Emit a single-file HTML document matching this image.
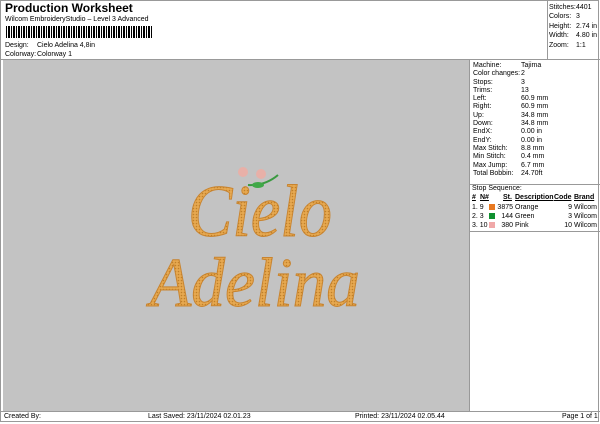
<!DOCTYPE html>
<html><head><style>
body{margin:0;width:600px;height:424px;background:#fff;font-family:"Liberation Sans",sans-serif;font-size:7px;color:#000;position:relative;overflow:hidden}
.a{position:absolute;white-space:nowrap}
.r{position:absolute;left:471px;width:126px}
.r div{height:8.3px;line-height:8.3px}
.r span{display:inline-block;width:46px;padding-left:2px}
</style></head><body>
<div class="a" style="left:0;top:0;width:599px;height:422px;border:1px solid #999;box-sizing:border-box"></div>
<div class="a" style="left:5px;top:1px;font-size:12px;font-weight:bold">Production Worksheet</div>
<div class="a" style="left:5px;top:16px">Wilcom EmbroideryStudio – Level 3 Advanced</div>
<div class="a" style="left:6px;top:26px;width:146px;height:12px;background:repeating-linear-gradient(90deg,#000 0 1px,#fff 1px 2px,#000 2px 4px,#fff 4px 5px)"></div>
<div class="a" style="left:5px;top:42px">Design:</div><div class="a" style="left:37px;top:42px">Cielo Adelina 4,8in</div>
<div class="a" style="left:5px;top:51px">Colorway:</div><div class="a" style="left:37px;top:51px">Colorway 1</div>
<div class="a" style="left:547px;top:0;width:1px;height:59px;background:#999"></div>
<div class="a" style="left:549px;top:3px;line-height:9.4px">Stitches:<br>Colors:<br>Height:<br>Width:<br>Zoom:</div>
<div class="a" style="left:576px;top:3px;line-height:9.4px">4401<br>3<br>2.74 in<br>4.80 in<br>1:1</div>
<div class="a" style="left:0;top:59px;width:600px;height:1px;background:#999"></div>
<div class="a" style="left:3px;top:60px;width:466px;height:351px;background:#c3c3c3"></div>
<div class="a" style="left:469px;top:60px;width:1px;height:351px;background:#999"></div>
<div class="a" style="left:0;top:411px;width:600px;height:1px;background:#999"></div>
<svg class="a" style="left:3px;top:60px" width="466" height="351">
<defs><pattern id="d" width="3" height="3" patternUnits="userSpaceOnUse"><rect width="3" height="3" fill="#e6a850"/><circle cx="1.5" cy="1.5" r="0.8" fill="#c0802a"/></pattern></defs>
<text x="185" y="176" font-family="Liberation Serif" font-style="italic" font-size="74" textLength="144" lengthAdjust="spacingAndGlyphs" fill="url(#d)" stroke="#c88430" stroke-width="1">Cielo</text>
<text x="147" y="246" font-family="Liberation Serif" font-style="italic" font-size="70" textLength="210" lengthAdjust="spacingAndGlyphs" fill="url(#d)" stroke="#c88430" stroke-width="1">Adelina</text>
<circle cx="240" cy="112" r="5" fill="#e8b0a8"/><circle cx="258" cy="114" r="5" fill="#e8b0a8"/>
<path d="M245 125 Q262 126 275 115" stroke="#3a9a40" stroke-width="2" fill="none"/>
<ellipse cx="255" cy="125" rx="6" ry="3" fill="#40a848"/>
</svg>
<div class="r" style="top:62px">
<div><span style="width:48px">Machine:</span>Tajima</div>
<div><span style="width:48px">Color changes:</span>2</div>
<div><span style="width:48px">Stops:</span>3</div>
<div><span style="width:48px">Trims:</span>13</div>
<div><span style="width:48px">Left:</span>60.9 mm</div>
<div><span style="width:48px">Right:</span>60.9 mm</div>
<div><span style="width:48px">Up:</span>34.8 mm</div>
<div><span style="width:48px">Down:</span>34.8 mm</div>
<div><span style="width:48px">EndX:</span>0.00 in</div>
<div><span style="width:48px">EndY:</span>0.00 in</div>
<div><span style="width:48px">Max Stitch:</span>8.8 mm</div>
<div><span style="width:48px">Min Stitch:</span>0.4 mm</div>
<div><span style="width:48px">Max Jump:</span>6.7 mm</div>
<div><span style="width:48px">Total Bobbin:</span>24.70ft</div>
</div>
<div class="a" style="left:469px;top:184px;width:131px;height:1px;background:#999"></div>
<div class="a" style="left:472px;top:185px">Stop Sequence:</div>
<div class="a" style="left:472px;top:194px;font-weight:bold;text-decoration:underline">#</div>
<div class="a" style="left:480px;top:194px;font-weight:bold;text-decoration:underline">N#</div>
<div class="a" style="left:503px;top:194px;font-weight:bold;text-decoration:underline">St.</div>
<div class="a" style="left:515px;top:194px;font-weight:bold;text-decoration:underline">Description</div>
<div class="a" style="left:554px;top:194px;font-weight:bold;text-decoration:underline">Code</div>
<div class="a" style="left:574px;top:194px;font-weight:bold;text-decoration:underline">Brand</div>
<div class="a" style="left:472px;top:203px;line-height:9px">1. 9<br>2. 3<br>3. 10</div>
<div class="a" style="left:489px;top:204px;width:6px;height:6px;background:#e87820"></div>
<div class="a" style="left:489px;top:213px;width:6px;height:6px;background:#109030"></div>
<div class="a" style="left:489px;top:222px;width:6px;height:6px;background:#f0a8a8"></div>
<div class="a" style="left:496px;top:203px;line-height:9px;width:17px;text-align:right">3875<br>144<br>380</div>
<div class="a" style="left:515px;top:203px;line-height:9px">Orange<br>Green<br>Pink</div>
<div class="a" style="left:550px;top:203px;line-height:9px;width:22px;text-align:right">9<br>3<br>10</div>
<div class="a" style="left:574px;top:203px;line-height:9px">Wilcom<br>Wilcom<br>Wilcom</div>
<div class="a" style="left:469px;top:231px;width:131px;height:1px;background:#999"></div>
<div class="a" style="left:4px;top:413px">Created By:</div>
<div class="a" style="left:148px;top:413px">Last Saved: 23/11/2024 02.01.23</div>
<div class="a" style="left:355px;top:413px">Printed: 23/11/2024 02.05.44</div>
<div class="a" style="left:562px;top:413px">Page 1 of 1</div>
</body></html>
